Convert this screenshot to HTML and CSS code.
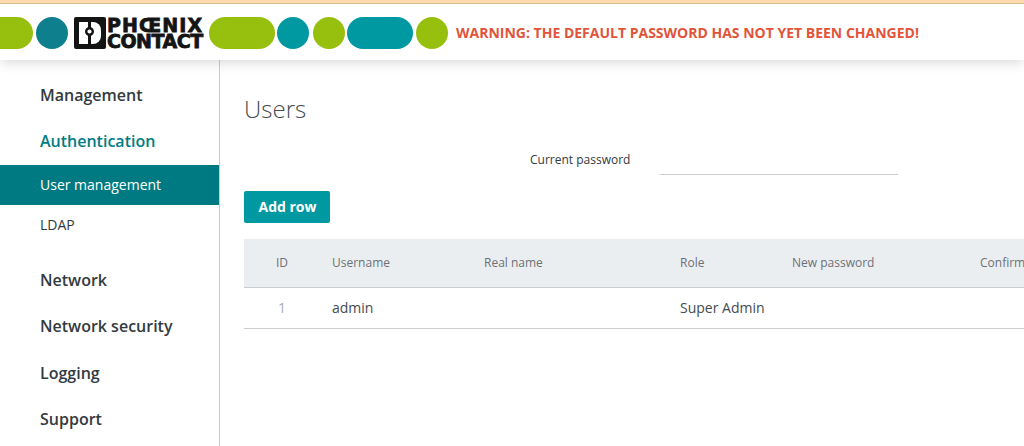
FILE: index.html
```html
<!DOCTYPE html>
<html lang="en">
<head>
<meta charset="utf-8">
<title>Users</title>
<link rel="stylesheet" href="styles.css">
</head>
<body>
<header class="topbar">
  <div class="brand">
    <span class="pill pill-cut"></span>
    <span class="dot dot-dark"></span>
    <div class="logo">
      <svg class="logo-mark" width="32" height="32" viewBox="0 0 32 32" aria-hidden="true">
        <rect x="0" y="0" width="32" height="32" rx="2" fill="#141414"/>
        <path d="M5 5h9v22H5z" fill="#fff"/>
        <path d="M17 5h2a8 8 0 0 1 8 8v6a8 8 0 0 1-8 8h-2z" fill="#fff"/>
        <rect x="14" y="18" width="3" height="11" fill="#141414"/>
        <circle cx="15.500" cy="14.500" r="3.300" fill="#fff" stroke="#141414" stroke-width="2.400"/>
      </svg>
      <div class="logo-text"><span class="logo-top">PHŒNIX</span><span class="logo-bottom">CONTACT</span></div>
    </div>
    <span class="pill pill-green"></span>
    <span class="dot dot-teal"></span>
    <span class="dot dot-green"></span>
    <span class="pill pill-teal"></span>
    <span class="dot dot-green"></span>
  </div>
  <strong class="warning">WARNING: THE DEFAULT PASSWORD HAS NOT YET BEEN CHANGED!</strong>
</header>
<div class="layout">
  <nav class="sidebar">
    <a class="nav-head">Management</a>
    <a class="nav-head is-open">Authentication</a>
    <a class="nav-sub is-active">User management</a>
    <a class="nav-sub">LDAP</a>
    <a class="nav-head nav-gap">Network</a>
    <a class="nav-head">Network security</a>
    <a class="nav-head">Logging</a>
    <a class="nav-head">Support</a>
  </nav>
  <main class="content">
    <h1 class="title">Users</h1>
    <div class="field">
      <label class="field-label" for="current">Current password</label>
      <input class="field-input" id="current" type="password">
    </div>
    <button class="btn" type="button">Add row</button>
    <table class="grid">
      <colgroup>
        <col class="c-id"><col class="c-user"><col class="c-real"><col class="c-role"><col class="c-pass"><col class="c-conf">
      </colgroup>
      <thead>
        <tr><th class="id-cell">ID</th><th>Username</th><th>Real name</th><th>Role</th><th>New password</th><th>Confirm password</th></tr>
      </thead>
      <tbody>
        <tr><td class="id-cell id-value">1</td><td>admin</td><td></td><td>Super Admin</td><td></td><td></td></tr>
      </tbody>
    </table>
  </main>
</div>
</body>
</html>
```
FILE: styles.css
```css
* { box-sizing: border-box; }
html, body { margin: 0; height: 100%; overflow: hidden; background: #fff; }
body { font-family: "Open Sans", sans-serif; color: #333a40; width: 1024px; height: 446px; }

.topbar {
  position: relative;
  z-index: 1;
  display: flex;
  align-items: center;
  height: 60px;
  padding-top: 3px;
  background: #fff;
  border-top: 3px solid #fdd9ae;
  box-shadow: 0 2px 12px rgba(0, 0, 0, 0.16);
}
.topbar::before {
  content: "";
  position: absolute;
  left: 0; right: 0; top: 0;
  height: 1px;
  background: #d9b98f;
}
.brand { display: flex; align-items: center; height: 32px; }
.pill, .dot { display: block; height: 32px; border-radius: 16px; flex: none; }
.dot { width: 32px; }
.pill-cut { width: 33px; background: #97bf0d; border-radius: 0 16px 16px 0; margin-right: 3px; }
.dot-dark { background: #0e7f8c; margin-right: 6px; }
.dot-teal { background: #0098a1; margin-right: 4px; }
.dot-green { background: #97bf0d; margin-right: 2px; }
.pill-green { width: 66px; background: #97bf0d; margin-right: 2px; }
.pill-teal { width: 66px; background: #0098a1; margin-right: 3px; }

.logo { display: flex; align-items: center; gap: 1px; width: 135px; flex: none; }
.logo-mark { flex: none; }
.logo-text {
  display: flex;
  flex-direction: column;
  font-family: "DejaVu Sans", sans-serif;
  font-weight: 700;
  font-size: 19px;
  line-height: 16px;
  color: #141414;
  -webkit-text-stroke: 0.8px #141414;
}
.logo-text span { display: block; white-space: nowrap; }
.logo-top { letter-spacing: 1.100px; }
.logo-bottom { letter-spacing: -0.500px; }

.warning {
  margin-left: 6px;
  font-size: 14px;
  font-weight: 700;
  color: #e2543a;
  white-space: nowrap;
  line-height: 18px;
  padding-bottom: 1px;
}

.layout { display: flex; height: 386px; }
.sidebar {
  width: 220px;
  flex: none;
  padding-top: 12px;
  border-right: 1px solid #ccc;
}
.sidebar a { display: flex; align-items: center; padding-left: 40px; }
.nav-head { height: 46.500px; font-size: 16px; font-weight: 600; color: #333a40; padding-bottom: 1px; }
.nav-head.is-open { color: #007c84; }
.nav-sub { height: 40px; font-size: 14px; color: #333a40; padding-bottom: 2px; }
.nav-sub.is-active { background: #007a82; color: #fff; }
.nav-gap { margin-top: 12px; }

.content { flex: 1; min-width: 0; padding: 29px 0 0 24px; overflow: hidden; }
.title { margin: 0; font-size: 24px; font-weight: 300; line-height: 40px; color: #444b50; }
.field { display: flex; align-items: center; height: 32px; margin-top: 14px; padding-left: 286px; }
.field-label { width: 130px; font-size: 12px; color: #333a40; }
.field-input {
  width: 238px;
  height: 32px;
  border: 0;
  border-bottom: 1px solid #ccc;
  background: transparent;
}
.btn {
  display: block;
  width: 86px;
  height: 32px;
  margin-top: 16px;
  padding: 0 0 2px 1px;
  border: 0;
  border-radius: 2px;
  background: #0098a1;
  color: #fff;
  font: 700 14px "Open Sans", sans-serif;
}

.grid {
  width: 900px;
  margin-top: 16px;
  table-layout: fixed;
  border-collapse: separate;
  border-spacing: 0;
}
.c-id { width: 88px; }
.c-user { width: 152px; }
.c-real { width: 196px; }
.c-role { width: 112px; }
.c-pass { width: 188px; }
.c-conf { width: 164px; }
.grid th {
  height: 49px;
  padding: 0 0 2px;
  text-align: left;
  font-size: 12px;
  font-weight: 400;
  color: #6b7176;
  background: #ebeef1;
  border-bottom: 1px solid #ccc;
  white-space: nowrap;
}
.grid td {
  height: 41px;
  padding: 0 0 2px;
  font-size: 14px;
  color: #444b50;
  border-bottom: 1px solid #ccc;
}
.grid .id-cell { padding-left: 32px; }
.grid .id-value { padding-left: 34px; color: #a9aeb2; }
```
